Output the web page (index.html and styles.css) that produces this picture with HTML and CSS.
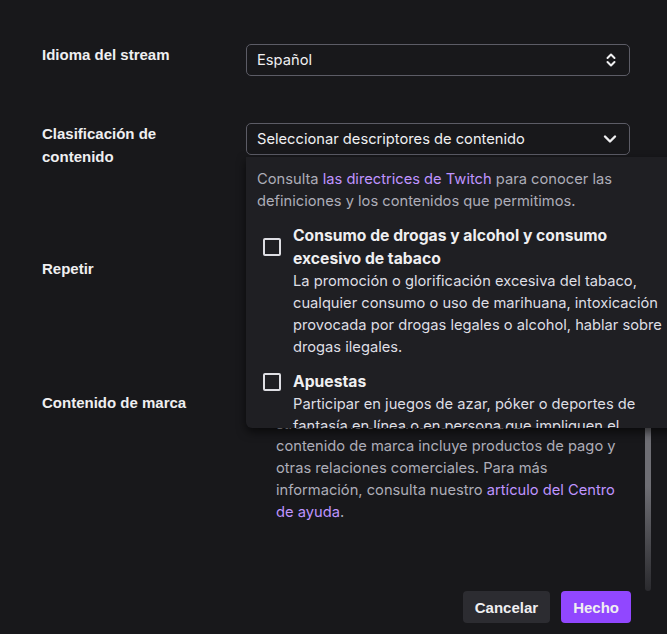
FILE: index.html
```html
<!DOCTYPE html>
<html lang="es">
<head>
    <meta charset="UTF-8">
    <meta name="viewport" content="width=device-width, initial-scale=1.0">
    <title>Editar información del stream</title>
    <link rel="stylesheet" href="styles.css">
</head>
<body>
    <div class="modal">
        <div class="modal-body">
            <div class="row row-lang">
                <div class="label">Idioma del stream</div>
                <div class="field">
                    <div class="select">
                        <span>Español</span>
                        <svg class="select-icon" width="12" height="16" viewBox="0 0 12 16">
                            <path d="M2.5 6 L6 2.5 L9.5 6 M2.5 10 L6 13.5 L9.5 10" fill="none" stroke="#efeff1" stroke-width="2" stroke-linecap="round" stroke-linejoin="round"/>
                        </svg>
                    </div>
                </div>
            </div>

            <div class="row row-rating">
                <div class="label">Clasificación de contenido</div>
                <div class="field">
                    <div class="select select-open">
                        <span>Seleccionar descriptores de contenido</span>
                        <svg class="select-icon" width="14" height="10" viewBox="0 0 14 10">
                            <path d="M2 2.5 L7 7.5 L12 2.5" fill="none" stroke="#efeff1" stroke-width="2.4" stroke-linecap="round" stroke-linejoin="round"/>
                        </svg>
                    </div>

                    <div class="popover">
                        <p class="popover-intro">Consulta <a href="#">las directrices de Twitch</a> para conocer las definiciones y los contenidos que permitimos.</p>

                        <div class="option">
                            <div class="option-head">
                                <span class="checkbox"></span>
                                <span class="option-title">Consumo de drogas y alcohol y consumo excesivo de tabaco</span>
                            </div>
                            <p class="option-desc">La promoción o glorificación excesiva del tabaco, cualquier consumo o uso de marihuana, intoxicación provocada por drogas legales o alcohol, hablar sobre drogas ilegales.</p>
                        </div>

                        <div class="option">
                            <div class="option-head">
                                <span class="checkbox"></span>
                                <span class="option-title">Apuestas</span>
                            </div>
                            <p class="option-desc">Participar en juegos de azar, póker o deportes de fantasía en línea o en persona que impliquen el intercambio de dinero real.</p>
                        </div>
                    </div>
                </div>
            </div>

            <div class="row row-rerun">
                <div class="label">Repetir</div>
                <div class="field"></div>
            </div>

            <div class="row row-brand">
                <div class="label">Contenido de marca</div>
                <div class="field">
                    <div class="brand">
                        <span class="checkbox"></span>
                        <p class="brand-text">Permite que los espectadores sepan que tu<br>stream tiene contenido de marca. El<br>contenido de marca incluye productos de pago y<br>otras relaciones comerciales. Para más<br>información, consulta nuestro <a href="#">artículo del Centro<br>de ayuda</a>.</p>
                    </div>
                </div>
            </div>

            <div class="scrollbar"></div>
        </div>

        <div class="modal-footer">
            <button class="btn btn-secondary">Cancelar</button>
            <button class="btn btn-primary">Hecho</button>
        </div>
    </div>
</body>
</html>
```

FILE: styles.css
```css
html, body {
    margin: 0;
    padding: 0;
    overflow: hidden;
}
body {
    background-color: #18181b;
    color: #efeff1;
    font-family: Inter, "Noto Sans", sans-serif;
    font-size: 14.7px;
}
a {
    color: #bf94ff;
    text-decoration: none;
}
p {
    margin: 0;
}
.modal {
    display: flex;
    flex-direction: column;
    height: 634px;
}
.modal-body {
    position: relative;
    flex: 1;
    padding: 43px 0 0 42px;
}
.row {
    display: grid;
    grid-template-columns: 204px 384px;
}
.row-lang {
    height: 79px;
}
.row-rating {
    height: 135px;
}
.row-rerun {
    height: 134px;
}
.label {
    font-family: "Liberation Sans", Arial, sans-serif;
    font-weight: 700;
    font-size: 15px;
    line-height: 23px;
    width: 150px;
}
.field {
    position: relative;
}
.select {
    display: flex;
    align-items: center;
    justify-content: space-between;
    height: 32px;
    margin-top: 1px;
    padding: 0 12px 0 10px;
    border: 1px solid #5c5c66;
    border-radius: 5px;
    box-sizing: border-box;
    font-size: 14.7px;
}
.select-icon {
    display: block;
}

/* desplegable de descriptores */
.popover {
    position: absolute;
    top: 35px;
    left: 0;
    width: 440px;
    height: 271px;
    box-sizing: border-box;
    padding: 11px 0 0 11px;
    background-color: #1f1f23;
    border-radius: 0 0 0 6px;
    box-shadow: 0 4px 10px rgba(0, 0, 0, 0.6);
    overflow: hidden;
    z-index: 2;
}
.popover-intro {
    width: 370px;
    color: #adadb8;
    line-height: 22px;
}
.option {
    margin-top: 12px;
    padding-left: 6px;
}
.option-head {
    display: flex;
    align-items: center;
    gap: 12px;
}
.checkbox {
    flex: none;
    width: 18px;
    height: 18px;
    box-sizing: border-box;
    border: 2px solid #dedee3;
    border-radius: 2px;
}
.option-title {
    width: 340px;
    font-weight: 700;
    font-size: 15.7px;
    line-height: 23px;
}
.option-desc {
    width: 380px;
    margin-left: 30px;
    color: #dedee3;
    line-height: 22px;
}

.brand {
    display: flex;
    gap: 12px;
}
.brand .checkbox {
    margin-top: 2px;
}
.brand-text {
    color: #adadb8;
    line-height: 22px;
}

.scrollbar {
    position: absolute;
    top: 170px;
    right: 16px;
    bottom: 0;
    width: 6px;
    border-radius: 3px;
    background: linear-gradient(to bottom, #6e6e74 0%, #6e6e74 75%, #2a2a2e 100%);
}

.modal-footer {
    display: flex;
    justify-content: flex-end;
    gap: 11px;
    padding: 0 36px 11px 0;
}
.btn {
    height: 32px;
    padding: 0 12px;
    border: none;
    border-radius: 4px;
    font-family: "Liberation Sans", Arial, sans-serif;
    font-weight: 700;
    font-size: 15px;
    color: #efeff1;
    cursor: pointer;
}
.btn-secondary {
    background-color: #2c2c31;
}
.btn-primary {
    background-color: #9147ff;
}
```
